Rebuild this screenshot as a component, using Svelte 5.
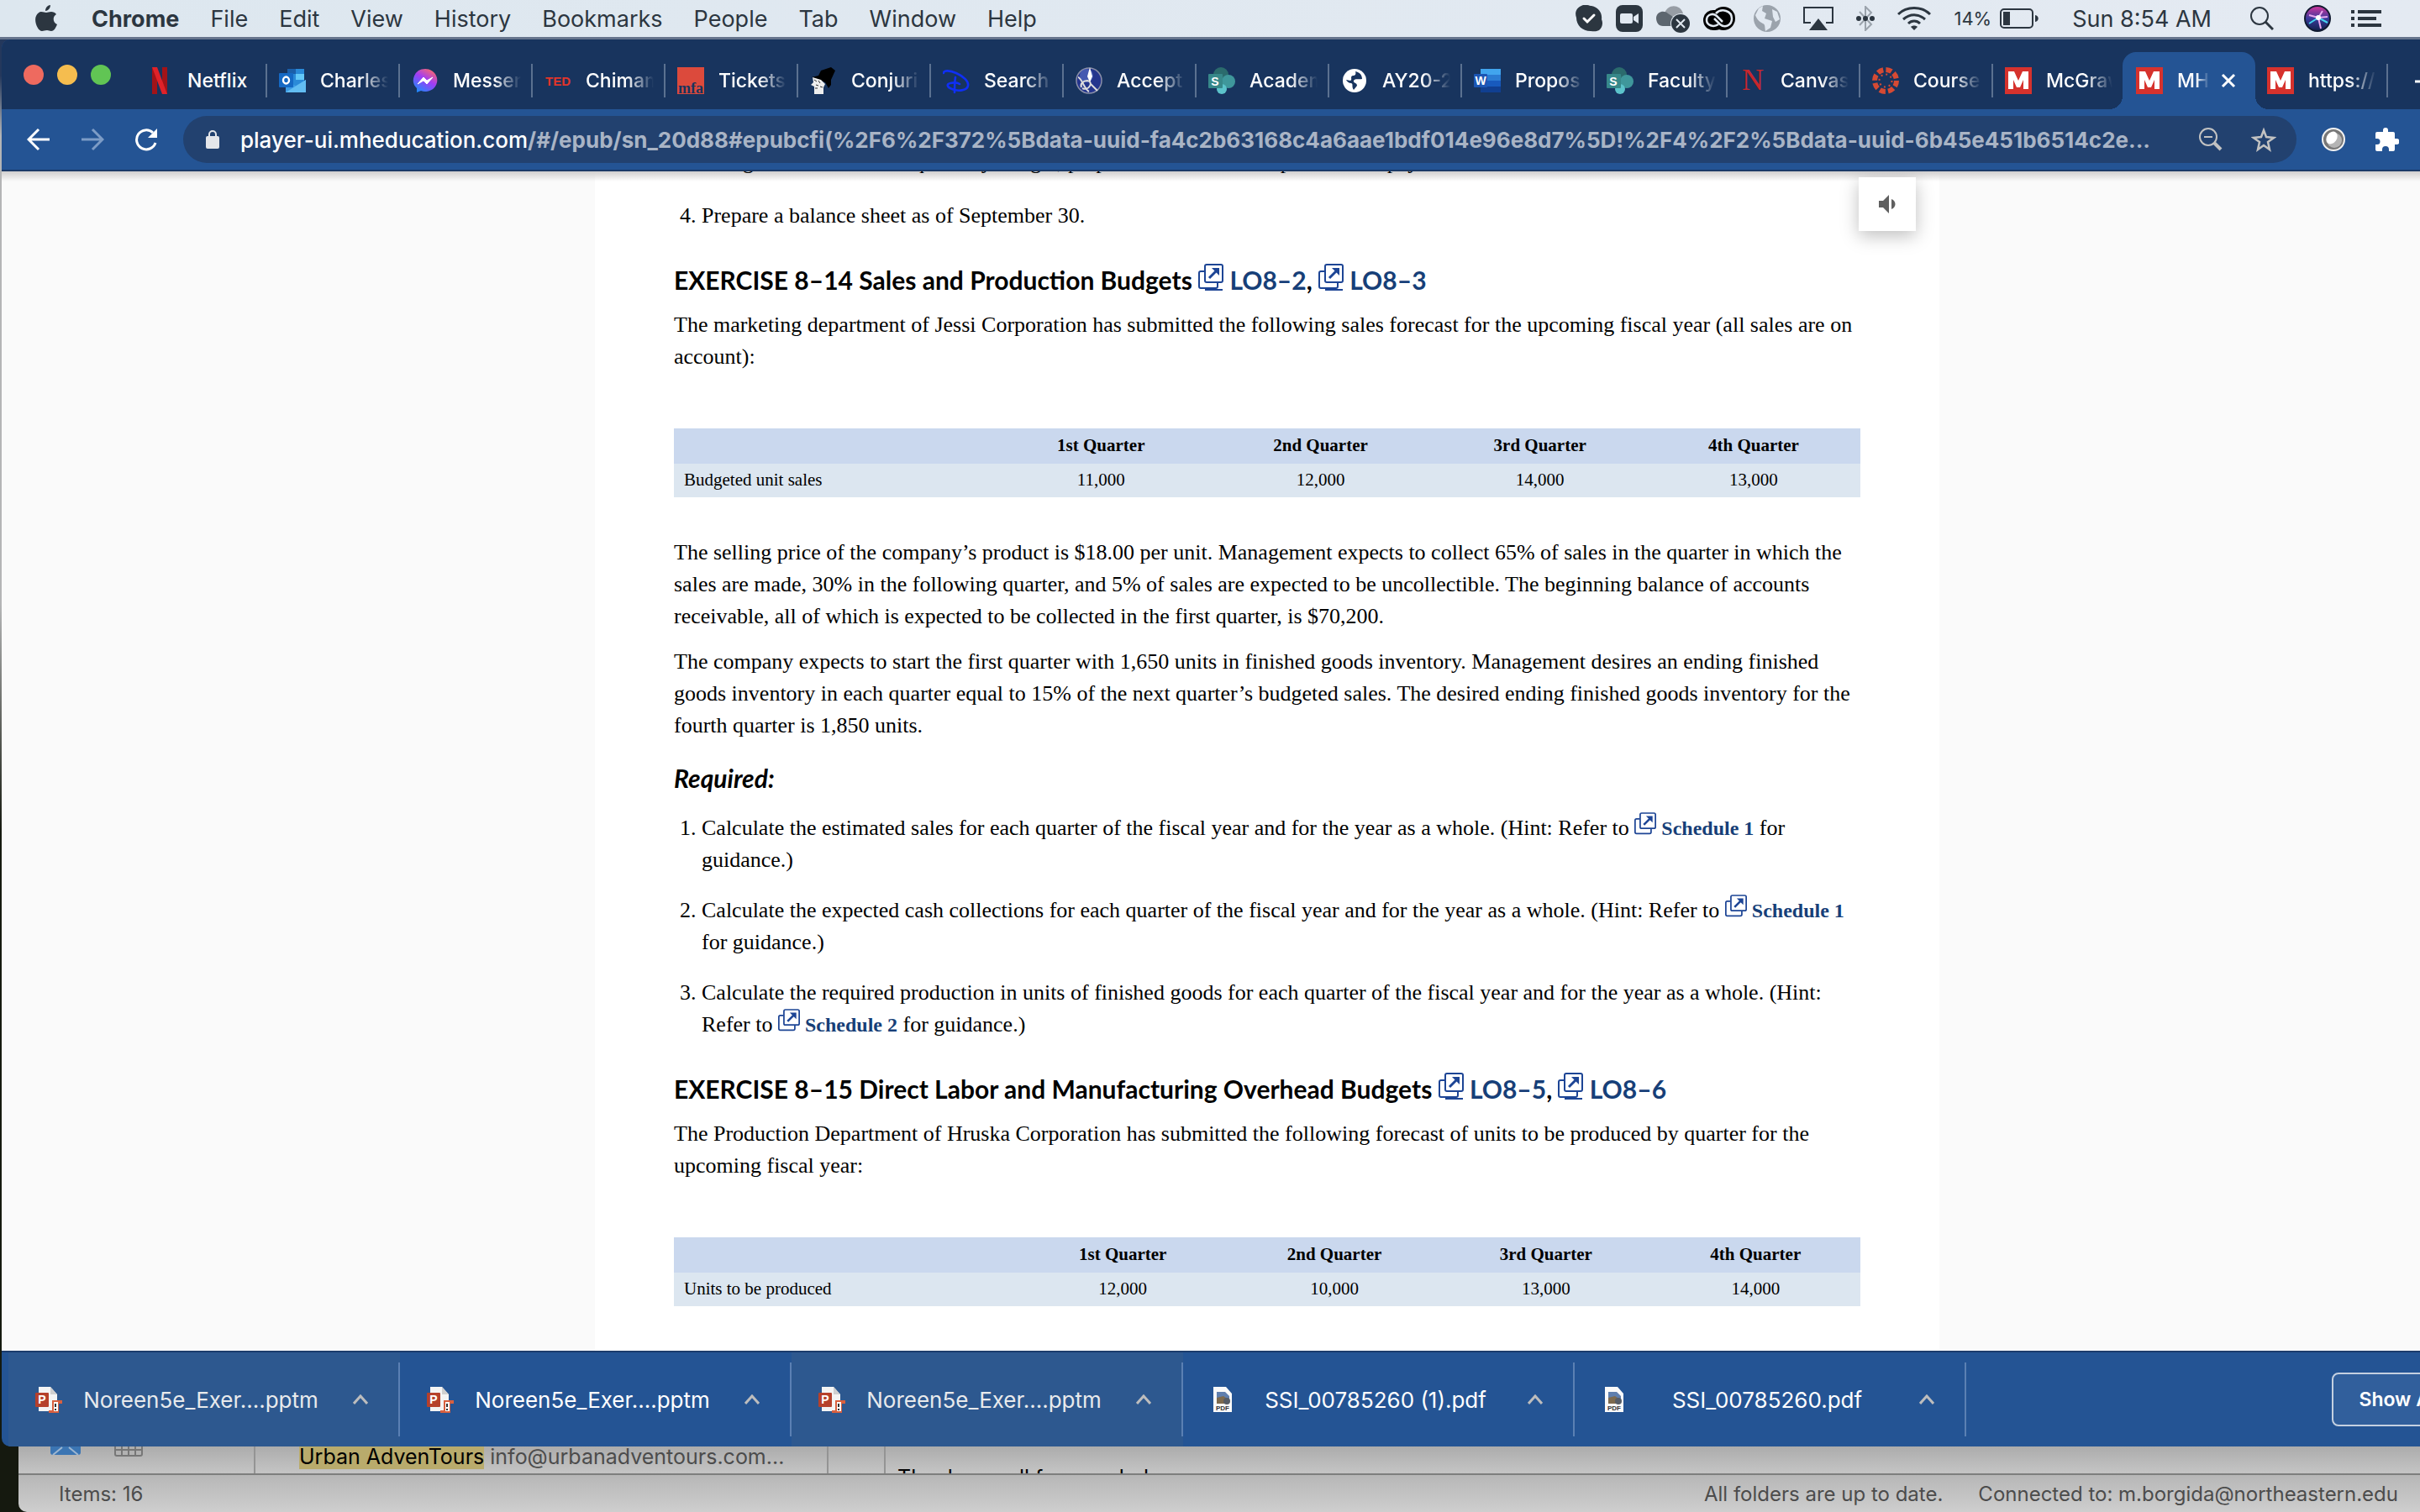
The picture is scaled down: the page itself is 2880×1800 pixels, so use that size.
<script lang="ts">
	type Tab = { title: string; icon: string; active?: boolean; bare?: boolean };

	const menus = ['File', 'Edit', 'View', 'History', 'Bookmarks', 'People', 'Tab', 'Window', 'Help'];

	const tabs: Tab[] = [
		{ title: 'Netflix', icon: 'netflix' },
		{ title: 'Charles', icon: 'outlook' },
		{ title: 'Messen', icon: 'messenger' },
		{ title: 'Chimam', icon: 'ted' },
		{ title: 'Tickets', icon: 'mfa' },
		{ title: 'Conjurin', icon: 'hat' },
		{ title: 'Search', icon: 'disney' },
		{ title: 'Accept', icon: 'pen' },
		{ title: 'Academ', icon: 'sharepoint' },
		{ title: 'AY20-21', icon: 'globe' },
		{ title: 'Propos', icon: 'word' },
		{ title: 'Faculty', icon: 'sharepoint' },
		{ title: 'Canvas', icon: 'northeastern' },
		{ title: 'Course', icon: 'canvas' },
		{ title: 'McGraw', icon: 'mcgraw', bare: true },
		{ title: 'MHE', icon: 'mcgraw', active: true },
		{ title: 'https://', icon: 'mcgraw' }
	];

	const downloads = [
		{ name: 'Noreen5e_Exer....pptm', kind: 'pptm', dim: true },
		{ name: 'Noreen5e_Exer....pptm', kind: 'pptm', dim: false },
		{ name: 'Noreen5e_Exer....pptm', kind: 'pptm', dim: true },
		{ name: 'SSI_00785260 (1).pdf', kind: 'pdf', dim: false },
		{ name: 'SSI_00785260.pdf', kind: 'pdf', dim: false }
	];

	const quarters = ['1st Quarter', '2nd Quarter', '3rd Quarter', '4th Quarter'];
	const sales = ['11,000', '12,000', '14,000', '13,000'];
	const units = ['12,000', '10,000', '13,000', '14,000'];
</script>

{#snippet favicon(icon: string)}
	<svg class="favicon" viewBox="0 0 32 32" aria-hidden="true">
		{#if icon === 'netflix'}
			<path d="M7 0h6v32H7zM19 0h6v32h-6z" fill="#a31318" />
			<path d="M7 0h6l12 32h-6z" fill="#e02229" />
		{:else if icon === 'outlook'}
			<path d="M10 2h20v20H10z" fill="#2a8ad8" />
			<path d="M10 2h10v6H10z" fill="#1b5faa" />
			<path d="M20 8h10v7H20z" fill="#63c8f8" />
			<path d="M8 16l12 6 12-7v15H8z" fill="#3b9be5" />
			<path d="M8 30l24-15v15z" fill="#62bdf2" />
			<rect y="7" width="17" height="17" rx="1" fill="#1569c4" />
			<ellipse cx="8.500" cy="15.500" rx="3.500" ry="4" fill="none" stroke="#fff" stroke-width="2.400" />
		{:else if icon === 'messenger'}
			<defs>
				<linearGradient id="msg" x1="0.8" y1="0" x2="0.2" y2="1">
					<stop offset="0" stop-color="#ff6a68" />
					<stop offset="0.45" stop-color="#a03cf5" />
					<stop offset="1" stop-color="#1a8cff" />
				</linearGradient>
			</defs>
			<path d="M16 2a14 13.500 0 1 1-5 26l-5 2v-5A14 13.500 0 0 1 16 2z" fill="url(#msg)" />
			<path d="M7 20l7-8 4 4 7-4-7 8-4-4z" fill="#fff" stroke="#fff" />
		{:else if icon === 'ted'}
			<text x="16" y="22" text-anchor="middle" class="ted">TED</text>
		{:else if icon === 'mfa'}
			<path d="M0 0h32v32H0z" fill="#dc4a3c" />
			<text x="16" y="31" text-anchor="middle" class="mfa">mfa</text>
		{:else if icon === 'hat'}
			<path d="M13 4l12-4 5 4-5 11v6l-3 4-4-7-16-6 8-2z" fill="#000" />
			<path d="M3 12l10 3 5 5-2 4v8H5v-9l-4-2 3-3z" fill="#eee" />
			<path d="M5 15l3 2m2-1l2 3m-5 2l3 1m-4 3h3M12 23l3 1" stroke="#333" />
		{:else if icon === 'disney'}
			<g fill="none" stroke="#0f2ff5" stroke-width="2.600" stroke-linecap="round">
				<path d="M1 7c0-4 8-3 15 0 9 4 15 10 14 15-1 6-12 7-19 4-6-2-7-6-2-7 4-1 8-1 11 1" />
				<path d="M15 12c-1 6-1 12-1 18" />
			</g>
		{:else if icon === 'pen'}
			<circle cx="16" cy="16" r="15" fill="#24358d" stroke="#8a8fa8" stroke-width="1.500" />
			<circle cx="13" cy="10" r="8" fill="#5a72c8" opacity="0.6" />
			<path d="M17 0l-3 11 3 7 3-7z" fill="#fff" />
			<path d="M3 12c4 0 7 14 13 17M8 25c8 4 14-8 6-9-5 0-9 4-7 8M18 20l8 8" fill="none" stroke="#ddd" stroke-width="2" />
		{:else if icon === 'sharepoint'}
			<circle cx="15" cy="9" r="9" fill="#2b6b6d" />
			<circle cx="24" cy="17" r="8" fill="#3f979b" />
			<circle cx="16" cy="26" r="6" fill="#5cc3cb" />
			<rect y="8" width="17" height="17" rx="1" fill="#37888a" />
			<text x="8" y="22" text-anchor="middle" class="letter">S</text>
		{:else if icon === 'globe'}
			<circle cx="16" cy="16" r="14" fill="#fff" />
			<path d="M17 5c5 1 8 4 8 9-4 1-8-1-10 2-1 3 4 2 4 6l-4 5c-3-4 0-7-3-8-3 0-5-2-6-4l5 1c3-1-1-5 3-6 3 0 4-2 3-5z" fill="#18345e" />
		{:else if icon === 'word'}
			<path d="M8 2h24v7H8z" fill="#41a5ee" />
			<path d="M8 9h24v7H8z" fill="#2b7cd3" />
			<path d="M8 16h24v7H8z" fill="#185abd" />
			<path d="M8 23h24v7H8z" fill="#103f91" />
			<rect y="8" width="16" height="16" rx="1" fill="#1c56b4" />
			<text x="8" y="21" text-anchor="middle" class="letter">W</text>
		{:else if icon === 'northeastern'}
			<text x="16" y="27" text-anchor="middle" class="husky">N</text>
		{:else if icon === 'canvas'}
			<g fill="none" stroke="#d64a33">
				<circle cx="16" cy="16" r="13" stroke-width="6" stroke-dasharray="7 3.210" />
				<circle cx="16" cy="16" r="7.500" stroke-width="2" stroke-dasharray="2 3.890" />
			</g>
		{:else}
			<path d="M0 0h32v32H0z" fill="#d6322d" />
			<path d="M4 26V5h7l5 11 5-11h7v21h-6V15l-4 9h-4l-4-9v11z" fill="#fff" />
		{/if}
	</svg>
{/snippet}

{#snippet popout(lined: boolean)}
	<svg class={lined ? 'popout big' : 'popout'} viewBox="0 0 30 32" aria-hidden="true">
		<g fill="none" stroke="#1d4595" stroke-width="2">
			<path d="M7 9H3a2 2 0 0 0-2 2v16a2 2 0 0 0 2 2h18a2 2 0 0 0 2-2v-4" />
			<rect x="8" y="1" width="21" height="21" rx="2" fill="#fff" />
			<path d="M13 17l9-9" stroke-width="3" />
		</g>
		<path d="M16 5h9v9z" fill="#1d4595" />
		{#if lined}<path d="M8 30h21v2H8z" fill="#1d4595" />{/if}
	</svg>
{/snippet}

{#snippet schedule(label: string, values: string[], kind: string)}
	<table class={kind}>
		<thead>
			<tr>
				<td></td>
				{#each quarters as quarter}
					<th scope="col">{quarter}</th>
				{/each}
			</tr>
		</thead>
		<tbody>
			<tr>
				<th scope="row">{label}</th>
				{#each values as value}
					<td>{value}</td>
				{/each}
			</tr>
		</tbody>
	</table>
{/snippet}

<div class="screen">
	<header class="menubar">
		<nav aria-label="Application menu">
			<svg class="apple" viewBox="0 0 26 32" aria-hidden="true">
				<path d="M18 0c0 4-3 7-6 7 0-4 3-7 6-7zM13 9c2 0 3-1 6-1 2 0 5 1 6 3-5 3-4 10 1 12-2 5-4 8-7 8-2 0-3-1-5-1-3 0-4 1-6 1C3 31-2 19 1 13c1-3 4-5 6-5 3 0 4 1 6 1z" />
			</svg>
			<strong>Chrome</strong>
			{#each menus as menu}
				<button>{menu}</button>
			{/each}
		</nav>

		<div class="status">
			<div class="apps">
				<svg viewBox="0 0 32 32" width="32" height="32" aria-hidden="true">
					<path d="M9 0c4-1 8 1 10 1 9 2 13 9 12 16 2 4 1 10-3 13-4 2-7 1-10 1C8 31 1 24 1 15-1 10 0 3 9 0z" fill="#2c3640" />
					<path d="M10 16l4 4 8-8" fill="none" stroke="#fff" stroke-width="3" stroke-linecap="round" />
				</svg>
				<svg viewBox="0 0 32 32" width="32" height="32" aria-hidden="true">
					<rect width="32" height="32" rx="8" fill="#2c3640" />
					<rect x="5" y="10" width="15" height="12" rx="2" fill="#e2e9f1" />
					<path d="M21 14l6-4v12l-6-4z" fill="#e2e9f1" />
				</svg>
				<svg viewBox="0 0 40 36" width="40" height="36" aria-hidden="true">
					<path d="M10 12C13 1 28 0 32 12c-2 4-12 6-22 0z" fill="#979da5" />
					<path d="M0 17c1-8 10-9 14-5l12 8-3 7H8c-5 0-8-4-8-10z" fill="#5d666f" />
					<circle cx="29" cy="24" r="12" fill="#e2e9f1" />
					<circle cx="29" cy="24" r="11" fill="#2c3640" />
					<path d="M24 19l10 10m0-10L24 29" stroke="#e2e9f1" stroke-width="2" />
				</svg>
				<svg viewBox="0 0 38 28" width="38" height="28" aria-hidden="true">
					<rect width="26" height="24" y="4" rx="12" fill="#000" />
					<circle cx="24" cy="14" r="14" fill="#000" />
					<g fill="none" stroke="#e2e9f1" stroke-width="2.500">
						<path d="M18 21c-6 4-14 1-14-5 0-7 8-9 12-5l7 7" />
						<path d="M15 8c7-7 19-3 19 6 0 8-8 12-14 7l-7-7" />
					</g>
				</svg>
			</div>
			<div class="indicators">
				<svg viewBox="0 0 32 32" width="32" height="32" aria-hidden="true">
					<circle cx="16" cy="16" r="16" fill="#9ba3ac" />
					<path d="M11 1l-1 6 5 3-2 6 9 3-2 8-6 4c-1-5 0-8-3-9-5-2-8-7-9-10l4-8zM22 5l6 3 3 9-5 3-3-6z" fill="#e2e9f1" />
				</svg>
				<svg viewBox="0 0 36 28" width="36" height="28" aria-hidden="true">
					<path d="M9 19H1V1h34v18h-8" fill="none" stroke="#2c3640" stroke-width="2" />
					<path d="M18 14l11 14H7z" fill="#2c3640" />
				</svg>
				<svg viewBox="0 0 22 30" width="22" height="30" aria-hidden="true">
					<path d="M4 7l14 15-7 7V1l7 7L4 23" fill="none" stroke="#9ba3ac" stroke-width="2" />
					<g fill="#2c3640">
						<circle cx="3" cy="15" r="3" /><circle cx="11" cy="15" r="3" /><circle cx="19" cy="15" r="3" />
					</g>
				</svg>
				<svg viewBox="0 0 40 28" width="40" height="28" aria-hidden="true">
					<g fill="none" stroke="#2c3640" stroke-width="3">
						<path d="M1 9c10-10 28-10 38 0M7 15c8-7 18-7 26 0M13 20c4-4 10-4 14 0" />
					</g>
					<path d="M16 24c2-2 6-2 8 0l-4 4z" fill="#2c3640" />
				</svg>
				<span class="battery">
					<span>14%</span>
					<svg viewBox="0 0 46 24" width="46" height="24" aria-hidden="true">
						<rect x="1" y="1" width="38" height="22" rx="4" fill="none" stroke="#2c3640" stroke-width="2" />
						<rect x="4" y="4" width="8" height="16" fill="#2c3640" />
						<path d="M42 8c5 1 5 7 0 8z" fill="#2c3640" />
					</svg>
				</span>
			</div>
			<span class="clock">Sun 8:54 AM</span>
			<svg viewBox="0 0 28 28" width="28" height="28" aria-hidden="true">
				<g fill="none" stroke="#2c3640" stroke-width="2">
					<circle cx="11" cy="11" r="10" /><path d="M18 18l9 9" stroke-width="3" />
				</g>
			</svg>
			<div class="siri">
				<svg viewBox="0 0 32 32" width="32" height="32" aria-hidden="true">
					<defs>
						<linearGradient id="siri" x1="0" y1="0" x2="0" y2="1">
							<stop offset="0" stop-color="#d8359c" />
							<stop offset="0.5" stop-color="#3a3a9c" />
							<stop offset="1" stop-color="#10204a" />
						</linearGradient>
					</defs>
					<circle cx="16" cy="16" r="15" fill="url(#siri)" stroke="#101a30" stroke-width="2" />
					<path d="M17 15L6 22M17 15l11 6" stroke="#45d6ee" stroke-width="2" />
					<path d="M17 15l3 13M17 15l5-8M17 15L6 12M17 15l11-1" stroke="#e9a8ee" stroke-width="2" />
					<circle cx="17" cy="15" r="3" fill="#fff" />
				</svg>
				<svg viewBox="0 0 36 20" width="36" height="20" aria-hidden="true">
					<path d="M0 0h4v4H0zM8 0h28v4H8zM0 8h4v4H0zM8 8h22v4H8zM0 16h4v4H0zM8 16h28v4H8z" fill="#2c3640" />
				</svg>
			</div>
		</div>
	</header>

	<main class="browser">
		<div class="tabstrip">
			<div class="lights">
				<button class="red" aria-label="Close window"></button>
				<button class="amber" aria-label="Minimise window"></button>
				<button class="green" aria-label="Zoom window"></button>
			</div>
			{#each tabs as tab}
				<div class="tab" class:active={tab.active} class:bare={tab.bare}>
					<button class="label">
						{@render favicon(tab.icon)}
						<span>{tab.title}</span>
					</button>
					{#if tab.active}
						<button class="close" aria-label="Close tab">
							<svg viewBox="0 0 18 18" width="18" height="18" aria-hidden="true">
								<path d="M2 2l14 14M16 2L2 16" stroke="#fff" stroke-width="3" />
							</svg>
						</button>
					{/if}
				</div>
			{/each}
			<button class="newtab" aria-label="New tab">
				<svg viewBox="0 0 24 24" width="24" height="24" aria-hidden="true">
					<path d="M0 12h24M12 0v24" stroke="#fff" stroke-width="3" />
				</svg>
			</button>
		</div>

		<div class="toolbar">
			<button aria-label="Back">
				<svg viewBox="0 0 28 28" width="28" height="28" aria-hidden="true">
					<path d="M27 14H3M14 2L2 14l12 12" fill="none" stroke="#fff" stroke-width="3" />
				</svg>
			</button>
			<button aria-label="Forward">
				<svg viewBox="0 0 28 28" width="28" height="28" aria-hidden="true">
					<path d="M1 14h24M14 2l12 12-12 12" fill="none" stroke="#7d9cc6" stroke-width="3" />
				</svg>
			</button>
			<button aria-label="Reload">
				<svg viewBox="0 0 28 28" width="28" height="28" aria-hidden="true">
					<path d="M25 18A11.500 11.500 0 1 1 22 6" fill="none" stroke="#fff" stroke-width="3" />
					<path d="M27 1v11H16z" fill="#fff" />
				</svg>
			</button>
			<div class="omnibox">
				<svg viewBox="0 0 18 24" width="18" height="24" aria-hidden="true">
					<path d="M5 9V6a4 4 0 0 1 8 0v3" fill="none" stroke="#e4e6ea" stroke-width="2" />
					<rect x="1" y="8" width="16" height="15" rx="2" fill="#e4e6ea" />
				</svg>
				<a class="url" href="#top"><b>player-ui.mheducation.com</b>/#/epub/sn_20d88#epubcfi(%2F6%2F372%5Bdata-uuid-fa4c2b63168c4a6aae1bdf014e96e8d7%5D!%2F4%2F2%5Bdata-uuid-6b45e451b6514c2e...</a>
				<button aria-label="Zoom">
					<svg viewBox="0 0 28 28" width="28" height="28" aria-hidden="true">
						<g fill="none" stroke="#c2c2c2" stroke-width="2">
							<circle cx="11" cy="11" r="10" /><path d="M18 18l8 8" stroke-width="4" />
						</g>
						<path d="M6 11h10" stroke="#c2c2c2" stroke-width="2" />
					</svg>
				</button>
				<button aria-label="Bookmark this page">
					<svg viewBox="0 0 30 30" width="30" height="30" aria-hidden="true">
						<path d="M15 4l3 8 9 1-7 5 2 9-7-5-7 5 2-9-7-5 9-1z" fill="none" stroke="#c2c2c2" stroke-width="2.500" />
					</svg>
				</button>
			</div>
			<button aria-label="Extension">
				<svg viewBox="0 0 28 28" width="28" height="28" aria-hidden="true">
					<circle cx="14" cy="14" r="13" fill="#777" stroke="#f2f2f2" stroke-width="2" />
					<circle cx="15" cy="15" r="9" fill="#b4b4b4" />
					<ellipse cx="12" cy="12" rx="6" ry="8" fill="#fff" transform="rotate(35 12 12)" />
				</svg>
			</button>
			<button aria-label="Extensions">
				<svg viewBox="0 0 28 28" width="28" height="28" aria-hidden="true">
					<path d="M2 5h7V3a3 3 0 0 1 6 0v2h6a2 2 0 0 1 2 2v6h2a3 3 0 0 1 0 7h-2v6a2 2 0 0 1-2 2h-5v-2a4 4 0 0 0-8 0v2H2a2 2 0 0 1-2-2v-6h2a3 3 0 0 0 0-7H0V7a2 2 0 0 1 2-2z" fill="#fff" />
				</svg>
			</button>
		</div>

		<div class="viewport">
			<article>
				<button class="speak" aria-label="Read aloud">
					<svg viewBox="0 0 20 22" width="20" height="22" aria-hidden="true">
						<path d="M0 7h5l7-7v22l-7-7H0zM15 5c6 2 6 10 0 12z" fill="#5f5f5f" />
					</svg>
				</button>

				<ol start="3" class="first">
					<li>Using the data from the quarterly budget, prepare a schedule of expected cash payments.</li>
					<li>Prepare a balance sheet as of September 30.</li>
				</ol>

				<h2>
					EXERCISE 8–14 Sales and Production Budgets
					<a href="#lo2">{@render popout(true)} LO8–2</a>,
					<a href="#lo3">{@render popout(true)} LO8–3</a>
				</h2>
				<p>
					The marketing department of Jessi Corporation has submitted the following sales forecast for
					the upcoming fiscal year (all sales are on account):
				</p>
				{@render schedule('Budgeted unit sales', sales, 'sales')}
				<p>
					The selling price of the company’s product is $18.00 per unit. Management expects to collect
					65% of sales in the quarter in which the sales are made, 30% in the following quarter, and 5%
					of sales are expected to be uncollectible. The beginning balance of accounts receivable, all
					of which is expected to be collected in the first quarter, is $70,200.
				</p>
				<p>
					The company expects to start the first quarter with 1,650 units in finished goods inventory.
					Management desires an ending finished goods inventory in each quarter equal to 15% of the next
					quarter’s budgeted sales. The desired ending finished goods inventory for the fourth quarter
					is 1,850 units.
				</p>

				<h3>Required:</h3>
				<ol>
					<li>
						Calculate the estimated sales for each quarter of the fiscal year and for the year as a
						whole. (Hint: Refer to <a href="#s1">{@render popout(false)} Schedule 1</a> for guidance.)
					</li>
					<li>
						Calculate the expected cash collections for each quarter of the fiscal year and for the
						year as a whole. (Hint: Refer to <a href="#s1">{@render popout(false)} Schedule 1</a> for
						guidance.)
					</li>
					<li>
						Calculate the required production in units of finished goods for each quarter of the
						fiscal year and for the year as a whole. (Hint: Refer to
						<a href="#s2">{@render popout(false)} Schedule 2</a> for guidance.)
					</li>
				</ol>

				<h2>
					EXERCISE 8–15 Direct Labor and Manufacturing Overhead Budgets
					<a href="#lo5">{@render popout(true)} LO8–5</a>,
					<a href="#lo6">{@render popout(true)} LO8–6</a>
				</h2>
				<p>
					The Production Department of Hruska Corporation has submitted the following forecast of units
					to be produced by quarter for the upcoming fiscal year:
				</p>
				{@render schedule('Units to be produced', units, 'units')}
			</article>
		</div>

		<div class="downloads">
			{#each downloads as file}
				<div class="download" class:dim={file.dim}>
					<svg viewBox="0 0 32 32" width="32" height="32" aria-hidden="true">
						{#if file.kind === 'pptm'}
							<path d="M4 1h14l8 9v20H4z" fill="#f4f4f4" />
							<path d="M18 1l8 9h-8z" fill="#cfcfcf" />
							<rect y="8" width="16" height="17" rx="1" fill="#b5402b" />
							<text x="8" y="21" text-anchor="middle" class="letter">P</text>
							<path d="M20 17h12v4h-4v11H16v-3h4z" fill="#d8603f" />
							<path d="M22 19h5v11h-5z" fill="#fff" />
							<path d="M24 21v4m0 2v2" stroke="#333" stroke-width="2" />
						{:else}
							<path d="M4 1h15l7 8v22H4z" fill="#fafafa" />
							<path d="M8 7h10l5 5v9H8z" fill="#5f7fae" />
							<path d="M8 14l8-2 7 5v4H8z" fill="#7d6a4e" />
							<circle cx="20" cy="18" r="4" fill="#555c66" />
							<text x="15" y="29" text-anchor="middle" class="pdf">PDF</text>
						{/if}
					</svg>
					<button class="name">{file.name}</button>
					<button class="more" aria-label="More options">
						<svg viewBox="0 0 18 12" width="18" height="12" aria-hidden="true">
							<path d="M1 11l8-9 8 9" fill="none" stroke="#bdbdbd" stroke-width="3" />
						</svg>
					</button>
				</div>
			{/each}
			<button class="showall">Show All</button>
		</div>
	</main>

	<section class="mail">
		<div class="panes">
			<div class="modes">
				<svg viewBox="0 0 36 10" width="36" height="10" aria-hidden="true">
					<path d="M0 0h36v7a3 3 0 0 1-3 3H3a3 3 0 0 1-3-3z" fill="#3b75b3" />
					<path d="M3 10L14 1m19 9L22 1" stroke="#9db6d0" stroke-width="2" />
				</svg>
				<svg viewBox="0 0 34 12" width="34" height="12" aria-hidden="true">
					<path d="M1 0v9a2 2 0 0 0 2 2h28a2 2 0 0 0 2-2V0M1 4h32M9 0v11M17 0v11M25 0v11" fill="none" stroke="#777" stroke-width="2" />
				</svg>
			</div>
			<div class="list"><span class="line"><mark>Urban AdvenTours</mark> info@urbanadventours.com...</span></div>
			<div class="gutter"></div>
			<div class="reading"><span class="line">Thank you all for your help</span></div>
		</div>
		<footer>
			<span>Items: 16</span>
			<span class="right">All folders are up to date.</span>
			<span>Connected to: m.borgida@northeastern.edu</span>
		</footer>
	</section>
</div>

<style>
	:global(body) {
		margin: 0;
	}

	.screen {
		display: flex;
		flex-direction: column;
		height: 100vh;
		overflow: hidden;
		background: linear-gradient(#24385c 5%, #b4b5b6 9%, #b4b5b6 40%, #15190f 55%);
		font-family: Inter, 'Liberation Sans', sans-serif;
	}
	button {
		padding: 0;
		border: 0;
		background: none;
		color: inherit;
		font: inherit;
	}
	svg {
		flex: none;
	}

	/* menu bar */
	.menubar {
		display: flex;
		flex: none;
		justify-content: space-between;
		align-items: center;
		height: 44px;
		padding: 0 46px 0 42px;
		border-bottom: 3px solid #66748c;
		background: linear-gradient(90deg, #dde7ef, #e4eaf2);
		color: #2c3640;
		font-size: 27px;
	}
	nav,
	.status,
	.apps,
	.indicators,
	.battery,
	.siri {
		display: flex;
		align-items: center;
	}
	nav {
		gap: 37px;
	}
	.apple {
		width: 26px;
		height: 32px;
		margin-right: 4px;
		fill: #2c3640;
	}
	.apps {
		gap: 16px;
		margin-right: 22px;
	}
	.indicators {
		gap: 27px;
	}
	.battery {
		gap: 10px;
		font-size: 22px;
	}
	.clock {
		margin: 0 46px 0 40px;
	}
	.siri {
		gap: 24px;
		margin-left: 36px;
	}

	/* browser window, which runs off the right edge of the screen */
	.browser {
		display: flex;
		flex: 1;
		flex-direction: column;
		width: calc(100% + 132px);
		min-height: 0;
		margin-left: 2px;
		overflow: hidden;
		border-radius: 10px 0 0 10px;
		background: #245494;
	}
	.tabstrip {
		display: flex;
		flex: none;
		align-items: flex-end;
		height: 83px;
		background: #18345e;
		color: #fff;
		font-size: 23px;
		font-weight: 500;
	}
	.lights {
		display: flex;
		gap: 16px;
		align-self: center;
		width: 132px;
		padding-left: 26px;
	}
	.lights button {
		width: 24px;
		height: 24px;
		border-radius: 50%;
	}
	.red {
		background: #ee6a5f;
	}
	.amber {
		background: #f5bd4f;
	}
	.green {
		background: #61c554;
	}
	.tab {
		display: flex;
		flex: none;
		align-items: center;
		width: 158px;
		height: 68px;
		background: linear-gradient(#5b7190, #5b7190) right center / 2px 40px no-repeat;
	}
	.tab.bare {
		width: 156px;
		background: none;
	}
	.label {
		display: flex;
		flex: 1;
		align-items: center;
		gap: 17px;
		min-width: 0;
		padding: 0 14px;
	}
	.label span {
		flex: 1;
		overflow: hidden;
		text-align: left;
		white-space: nowrap;
		mask-image: linear-gradient(90deg, #000 60%, transparent);
	}
	/* the first title fits, so it needs no fade */
	.lights + .tab span {
		mask-image: none;
	}
	.favicon {
		width: 32px;
		height: 32px;
	}
	.tab.active {
		position: relative;
		margin-left: -2px;
		border-radius: 16px 16px 0 0;
		background: #245494;
	}
	.tab.active::before,
	.tab.active::after {
		position: absolute;
		bottom: 0;
		width: 16px;
		height: 16px;
		content: '';
	}
	.tab.active::before {
		right: 100%;
		background: radial-gradient(circle at 0 0, #18345e 16px, #245494 16px);
	}
	.tab.active::after {
		left: 100%;
		background: radial-gradient(circle at 100% 0, #18345e 16px, #245494 16px);
	}
	.active .label {
		padding: 0 14px 0 16px;
	}
	.close {
		display: flex;
		margin-right: 23px;
	}
	.newtab {
		display: flex;
		align-self: stretch;
		align-items: center;
		padding: 16px 32px 0;
	}

	.ted {
		fill: #e0352b;
		font: 900 15px 'Liberation Sans', sans-serif;
	}
	.mfa {
		fill: #18345e;
		font: bold 18px 'Liberation Serif', serif;
	}
	.letter {
		fill: #fff;
		font: bold 14px 'Liberation Sans', sans-serif;
	}
	.husky {
		fill: #c8262c;
		font: 36px 'Liberation Serif', serif;
	}
	.pdf {
		fill: #333;
		font: bold 8px 'Liberation Sans', sans-serif;
	}

	.toolbar {
		display: flex;
		flex: none;
		gap: 36px;
		align-items: center;
		height: 72px;
		padding: 0 159px 0 30px;
		border-bottom: 2px solid #1b3a68;
	}
	.toolbar button {
		display: flex;
	}
	.omnibox {
		display: flex;
		flex: 1;
		gap: 34px;
		align-items: center;
		height: 56px;
		margin: 0 -6px;
		padding: 0 24px 0 26px;
		border-radius: 28px;
		background: #22416f;
	}
	.url {
		flex: 1;
		margin-left: -10px;
		overflow: hidden;
		color: #a9b4c5;
		font-size: 26px;
		text-decoration: none;
		white-space: nowrap;
	}
	.url b {
		color: #fff;
		font-weight: 500;
	}

	/* e-book page */
	.viewport {
		flex: 1;
		min-height: 0;
		overflow: hidden;
		background: linear-gradient(#d0cece, transparent 12px), #fafafa;
	}
	article {
		position: relative;
		display: flow-root;
		box-sizing: border-box;
		width: 1600px;
		height: 100%;
		margin: 0 auto;
		padding: 0 94px;
		background: linear-gradient(#d0cece, #fff 12px);
		color: #000;
		font: 26px/38px 'Liberation Serif', serif;
	}
	.speak {
		position: absolute;
		top: 7px;
		right: 28px;
		display: flex;
		justify-content: center;
		align-items: center;
		width: 68px;
		height: 64px;
		background: #fff;
		box-shadow: 0 6px 20px rgb(0 0 0 / 25%);
	}
	p {
		margin: 0 0 16px;
	}
	h2,
	h3 {
		margin: 0;
		font: bold 30px/38px Lato, sans-serif;
	}
	h2 {
		padding: 38px 0 16px;
	}
	h3 {
		padding: 8px 0 22px;
		font-style: italic;
	}
	ol {
		margin: 0;
		padding: 0 0 0 33px;
	}
	li + li {
		margin-top: 22px;
	}
	.first {
		margin-top: -30px;
	}
	.first li + li {
		margin-top: 26px;
	}
	a {
		color: #173f78;
		font-weight: bold;
		text-decoration: none;
	}
	li a {
		font-size: 24px;
		white-space: nowrap;
	}
	.popout {
		width: 26px;
		height: 28px;
		vertical-align: -1px;
	}
	.popout.big {
		width: 30px;
		height: 32px;
	}

	table {
		width: 100%;
		margin: 66px 0 47px;
		border-collapse: collapse;
		table-layout: fixed;
		font-size: 21px;
		line-height: 24px;
		text-align: center;
	}
	thead {
		background: #cad8ee;
	}
	tbody {
		background: #dce6f0;
	}
	td,
	th {
		height: 38px;
		padding: 0 0 2px;
	}
	thead th {
		height: 40px;
	}
	th[scope='row'] {
		padding-left: 12px;
		font-weight: 400;
		text-align: left;
	}
	.sales td:first-child {
		width: 27%;
	}
	.sales th:nth-child(3) {
		width: 19%;
	}
	.units td:first-child {
		width: 29%;
	}
	.units th:nth-child(3) {
		width: 18%;
	}

	/* downloads shelf */
	.downloads {
		display: flex;
		flex: none;
		align-items: center;
		height: 112px;
		padding: 0 78px 0 8px;
		border-top: 2px solid #1b3c6c;
		color: #fff;
		font-size: 26px;
	}
	.download {
		display: flex;
		align-items: center;
		box-sizing: border-box;
		width: 466px;
		height: 100%;
		padding: 0 38px 0 32px;
		background: linear-gradient(#5b80b3, #5b80b3) right center / 2px 88px no-repeat;
	}
	.download.dim {
		background-color: #2d588f;
		color: #e8eaec;
	}
	.download .name {
		flex: 1;
		padding-right: 16px;
	}
	.more {
		display: flex;
	}
	.showall {
		height: 64px;
		margin-left: auto;
		padding: 0 30px;
		border: 2px solid #c4d0e0;
		border-radius: 8px;
		background: #315f9c;
		font-size: 23px;
		font-weight: 600;
	}

	/* mail window showing below the browser */
	.mail {
		flex: none;
		margin-left: 22px;
		overflow: hidden;
		border-radius: 0 0 0 10px;
		background: linear-gradient(#acacac, #c4c4c4 40%, #b6b6b6 42%, #cecece);
		color: #4c4c4c;
		font-size: 24px;
	}
	.panes {
		display: flex;
		height: 32px;
		overflow: hidden;
		border-bottom: 2px solid #7e7f7e;
		font-size: 25px;
	}
	.modes {
		display: flex;
		gap: 40px;
		align-items: flex-start;
		width: 242px;
		padding-left: 38px;
		border-right: 2px solid #949494;
	}
	.line {
		display: block;
		line-height: 24px;
		white-space: nowrap;
	}
	.list {
		width: 628px;
		padding-left: 52px;
		border-right: 2px solid #949494;
	}
	mark {
		background: #b9ab6c;
		color: #000;
	}
	.gutter {
		width: 66px;
		border-right: 2px solid #949494;
	}
	.reading {
		padding: 25px 0 0 14px;
		color: #000;
	}
	footer {
		display: flex;
		gap: 42px;
		align-items: center;
		height: 44px;
		padding: 0 26px 0 48px;
	}
	.right {
		margin-left: auto;
	}
</style>
